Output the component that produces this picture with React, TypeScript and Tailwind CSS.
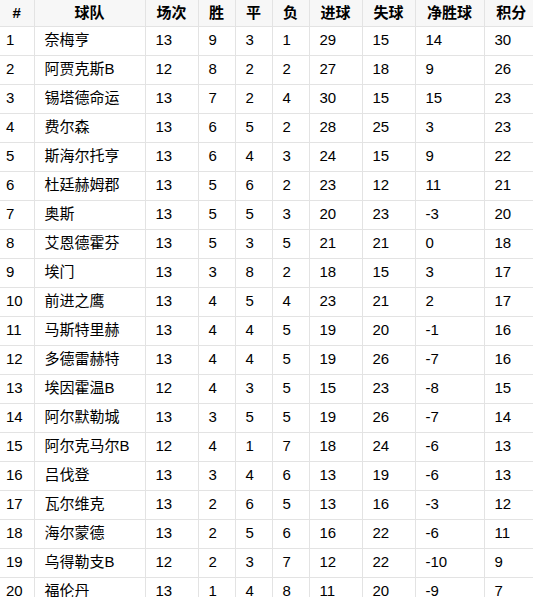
import React from 'react';

const rows: (string | number)[][] = [
  [1, '奈梅亨', 13, 9, 3, 1, 29, 15, 14, 30],
  [2, '阿贾克斯B', 12, 8, 2, 2, 27, 18, 9, 26],
  [3, '锡塔德命运', 13, 7, 2, 4, 30, 15, 15, 23],
  [4, '费尔森', 13, 6, 5, 2, 28, 25, 3, 23],
  [5, '斯海尔托亨', 13, 6, 4, 3, 24, 15, 9, 22],
  [6, '杜廷赫姆郡', 13, 5, 6, 2, 23, 12, 11, 21],
  [7, '奥斯', 13, 5, 5, 3, 20, 23, -3, 20],
  [8, '艾恩德霍芬', 13, 5, 3, 5, 21, 21, 0, 18],
  [9, '埃门', 13, 3, 8, 2, 18, 15, 3, 17],
  [10, '前进之鹰', 13, 4, 5, 4, 23, 21, 2, 17],
  [11, '马斯特里赫', 13, 4, 4, 5, 19, 20, -1, 16],
  [12, '多德雷赫特', 13, 4, 4, 5, 19, 26, -7, 16],
  [13, '埃因霍温B', 12, 4, 3, 5, 15, 23, -8, 15],
  [14, '阿尔默勒城', 13, 3, 5, 5, 19, 26, -7, 14],
  [15, '阿尔克马尔B', 12, 4, 1, 7, 18, 24, -6, 13],
  [16, '吕伐登', 13, 3, 4, 6, 13, 19, -6, 13],
  [17, '瓦尔维克', 13, 2, 6, 5, 13, 16, -3, 12],
  [18, '海尔蒙德', 13, 2, 5, 6, 16, 22, -6, 11],
  [19, '乌得勒支B', 12, 2, 3, 7, 12, 22, -10, 9],
  [20, '福伦丹', 13, 1, 4, 8, 11, 20, -9, 7],
];

const headers = ['#', '球队', '场次', '胜', '平', '负', '进球', '失球', '净胜球', '积分'];
const widths = ['w-[34px]', 'w-[111px]', 'w-[53px]', 'w-[37px]', 'w-[37px]', 'w-[37px]', 'w-[53px]', 'w-[53px]', 'w-[69px]', 'w-[54px]'];

export default function App() {
  return (
    <div className="w-[533px] h-[597px] overflow-hidden bg-white text-black font-['Liberation_Sans','Noto_Sans_CJK_SC',sans-serif] text-[15px]">
      <table className="w-[538px] table-fixed border-collapse">
        <colgroup>
          {widths.map((w, i) => (
            <col key={i} className={w} />
          ))}
        </colgroup>
        <thead>
          <tr className="h-[26px] bg-[#f7f7f7]">
            {headers.map((h, i) => (
              <th
                key={h}
                className={`p-0 text-center font-bold border-b border-[#e3e3e3] ${i < 9 ? 'border-r' : ''}`}
              >
                {h}
              </th>
            ))}
          </tr>
        </thead>
        <tbody>
          {rows.map((r) => (
            <tr key={r[0]} className="h-[29px]">
              {r.map((c, i) => (
                <td
                  key={i}
                  className={`py-0 text-left whitespace-nowrap border-b border-[#e3e3e3] ${i === 0 ? 'pl-[6px]' : 'pl-[10px]'} ${i < 9 ? 'border-r' : ''}`}
                >
                  {c}
                </td>
              ))}
            </tr>
          ))}
        </tbody>
      </table>
    </div>
  );
}
